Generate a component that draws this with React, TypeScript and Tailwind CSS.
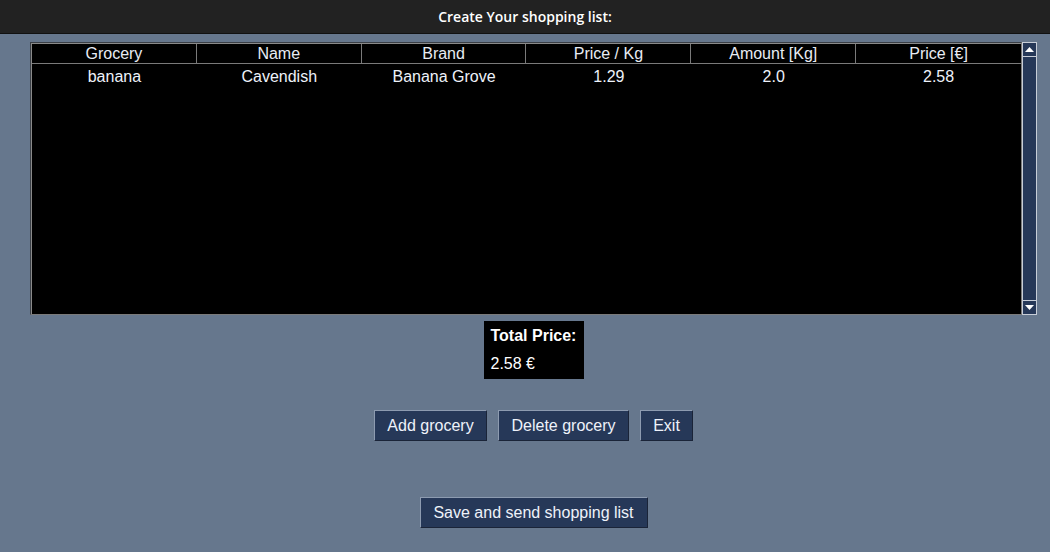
const columns = ['Grocery', 'Name', 'Brand', 'Price / Kg', 'Amount [Kg]', 'Price [€]'];
const rows = [['banana', 'Cavendish', 'Banana Grove', '1.29', '2.0', '2.58']];

function Btn({ label, w }: { label: string; w: string }) {
  return (
    <button className={`${w} h-[31px] bg-[#263858] text-[#eef2fa] text-[16px] border border-t-[#8d9bb0] border-l-[#8d9bb0] border-b-[#1a2438] border-r-[#1a2438]`}>
      {label}
    </button>
  );
}

export default function App() {
  return (
    <div className="w-[1050px] h-[552px] bg-[#66778d] flex flex-col font-['Liberation_Sans',Arial,sans-serif] overflow-hidden">
      <div className="h-[34px] bg-[#222222] border-b border-[#111111] flex items-center justify-center text-white text-[14px] font-semibold font-['Open_Sans',sans-serif] shrink-0">
        Create Your shopping list:
      </div>
      <div className="flex flex-col items-center pl-[30px] pr-[13px] pt-[8px]">
        <div className="flex w-full h-[273px]">
          <div className="flex-1 bg-black border border-t-[#3a3f46] border-l-[#3a3f46] border-r-[#7a7a7a] border-b-[#7a7a7a]">
            <div className="h-full border border-[#8a8a8a] border-r-0 border-b-0">
              <div className="grid grid-cols-6 h-[20px] border-b border-[#7a7a7a]">
                {columns.map((c, i) => (
                  <div
                    key={c}
                    className={`flex items-center justify-center text-[#e8ecf4] text-[16px] leading-none ${i < 5 ? 'border-r border-[#7a7a7a]' : ''}`}
                  >
                    {c}
                  </div>
                ))}
              </div>
              {rows.map((r) => (
                <div key={r[0]} className="grid grid-cols-6 h-[26px]">
                  {r.map((v, i) => (
                    <div key={i} className="flex items-center justify-center text-[#eef2fa] text-[16px] leading-none">
                      {v}
                    </div>
                  ))}
                </div>
              ))}
            </div>
          </div>
          <div className="w-[15px] bg-[#263858] border border-[#c8ced8] flex flex-col justify-between">
            <div className="h-[14px] border-b border-[#c8ced8] flex items-center justify-center">
              <svg width="9" height="6" viewBox="0 0 9 6"><path d="M4.5 0L9 5H0z" fill="#ffffff" /></svg>
            </div>
            <div className="h-[14px] border-t border-[#c8ced8] flex items-center justify-center">
              <svg width="9" height="6" viewBox="0 0 9 6"><path d="M0 0h9L4.5 5z" fill="#ffffff" /></svg>
            </div>
          </div>
        </div>
        <div className="mt-[6px] w-[100px] h-[58px] bg-black text-white flex flex-col px-[7px] pt-[5px]">
          <div className="text-[16px] font-bold leading-[20px]">Total Price:</div>
          <div className="text-[16px] leading-[20px] mt-[8px]">2.58 €</div>
        </div>
        <div className="mt-[31px] flex gap-[11px]">
          <Btn label="Add grocery" w="w-[113px]" />
          <Btn label="Delete grocery" w="w-[131px]" />
          <Btn label="Exit" w="w-[53px]" />
        </div>
        <div className="mt-[56px]">
          <Btn label="Save and send shopping list" w="w-[228px]" />
        </div>
      </div>
    </div>
  );
}
